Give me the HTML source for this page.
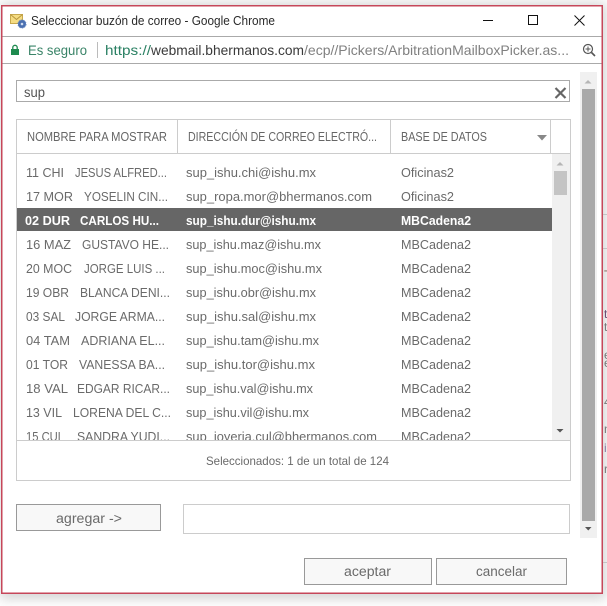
<!DOCTYPE html>
<html><head><meta charset="utf-8"><style>
html,body{margin:0;padding:0;background:#fff;width:607px;height:606px;overflow:hidden}
svg{display:block}
text{font-family:"Liberation Sans",sans-serif;font-size:12.5px;fill:#6a6a6a}
.s{font-weight:bold;fill:#fff}
.f{font-size:12px;fill:#777}
</style></head><body>
<svg width="607" height="606" viewBox="0 0 607 606" xmlns="http://www.w3.org/2000/svg">
<defs>
<filter id="sh" x="-5%" y="-5%" width="110%" height="110%"><feGaussianBlur stdDeviation="6"/></filter>
<clipPath id="list"><rect x="17" y="154" width="535" height="286"/></clipPath>
</defs>
<rect x="0" y="0" width="607" height="606" fill="#fff"/>
<rect x="0" y="3" width="606" height="596" fill="#999" opacity=".42" filter="url(#sh)"/>
<g fill="#c4c4c4"><rect x="603" y="214" width="4" height="1"/><rect x="603" y="248" width="4" height="1"/><rect x="603" y="562" width="4" height="1"/></g>
<text class="f" x="604" y="279" style="fill:#7a5a50">T</text>
<text class="f" x="604" y="318" style="fill:#6b4a70">t</text>
<text class="f" x="604" y="331">t</text>
<text class="f" x="604" y="359">e</text>
<text class="f" x="604" y="367">e</text>
<text class="f" x="604" y="406">4</text>
<text class="f" x="604" y="433">n</text>
<text class="f" x="604" y="452" style="fill:#8a7aa0">ic</text>
<text class="f" x="604" y="473">r</text>
<rect x="1.750" y="5.750" width="600.500" height="587.500" fill="#fff" stroke="#c6475a" stroke-width="1.500"/>
<rect x="2.500" y="36" width="599" height="1" fill="#aaa"/>
<rect x="2.500" y="63" width="599" height="1" fill="#aaa"/>

<!-- title icon -->
<rect x="10.500" y="14.500" width="12" height="9" fill="#f5dc82" stroke="#c8a94e" stroke-width="1"/>
<path d="M10.500 14.500l6 5 6-5" fill="none" stroke="#b8973f" stroke-width="1"/>
<circle cx="22" cy="24" r="4" fill="#4a6fb0" stroke="#5f83c0" stroke-dasharray="1.500 1" stroke-width="1"/>
<circle cx="22" cy="24" r="1.300" fill="#cfdcf0"/>
<text x="31" y="25" textLength="244" lengthAdjust="spacingAndGlyphs" style="font-size:13px;fill:#2a2a2a">Seleccionar buzón de correo - Google Chrome</text>

<!-- window controls -->
<rect x="483" y="20" width="10" height="1" fill="#111"/>
<rect x="528.500" y="15.500" width="9" height="9" fill="none" stroke="#111"/>
<path d="M574.500 15.500l10 10M584.500 15.500l-10 10" stroke="#111" stroke-width="1" fill="none"/>

<!-- address bar -->
<rect x="11" y="49" width="8" height="6" fill="#1e8a4f"/>
<path d="M12.800 49v-1.500a2.200 2.200 0 0 1 4.400 0V49" fill="none" stroke="#1e8a4f" stroke-width="1.300"/>
<text x="28" y="55" textLength="59" lengthAdjust="spacingAndGlyphs" style="font-size:14px;fill:#3a8468">Es seguro</text>
<rect x="97" y="42" width="1" height="16" fill="#bbb"/>
<text x="105" y="55" textLength="46" lengthAdjust="spacingAndGlyphs" style="font-size:14px;fill:#2a8063">https://</text>
<text x="151" y="55" textLength="153" lengthAdjust="spacingAndGlyphs" style="font-size:14px;fill:#3a3a3a">webmail.bhermanos.com</text>
<text x="304" y="55" textLength="265" lengthAdjust="spacingAndGlyphs" style="font-size:14px;fill:#808080">/ecp//Pickers/ArbitrationMailboxPicker.as...</text>
<circle cx="588" cy="49" r="4.500" fill="none" stroke="#555" stroke-width="1.200"/>
<path d="M591.500 52.500l3.500 3.500" stroke="#555" stroke-width="1.600"/>
<path d="M585.500 49h5M588 46.500v5" stroke="#555" stroke-width="1"/>

<!-- page scrollbar -->
<rect x="580" y="72" width="17" height="466" fill="#f0f0f0"/>
<rect x="582" y="89" width="13" height="432" fill="#a9a9a9"/>
<path d="M584.500 83.500l3.500-3.500 3.500 3.500z" fill="#b5b5b5"/>
<path d="M585 527h6.500l-3.250 3.500z" fill="#555"/>

<!-- search -->
<rect x="16.500" y="80.500" width="553" height="21" fill="#fff" stroke="#aaa"/>
<text x="24" y="97" textLength="21" lengthAdjust="spacingAndGlyphs" style="font-size:13.500px;fill:#555">sup</text>
<path d="M555.500 88l10 10M565.500 88l-10 10" stroke="#666" stroke-width="2.200" fill="none"/>

<!-- table -->
<rect x="16.500" y="119.500" width="554" height="361" fill="#fff" stroke="#ccc"/>
<rect x="17" y="153" width="553" height="1" fill="#ccc"/>
<rect x="177" y="120" width="1" height="33" fill="#ccc"/>
<rect x="390" y="120" width="1" height="33" fill="#ccc"/>
<rect x="550" y="120" width="1" height="33" fill="#ccc"/>
<text x="27" y="141" textLength="140" lengthAdjust="spacingAndGlyphs" style="font-size:12.500px;fill:#666">NOMBRE PARA MOSTRAR</text>
<text x="188" y="141" textLength="189" lengthAdjust="spacingAndGlyphs" style="font-size:12.500px;fill:#666">DIRECCIÓN DE CORREO ELECTRÓ...</text>
<text x="401" y="141" textLength="86" lengthAdjust="spacingAndGlyphs" style="font-size:12.500px;fill:#666">BASE DE DATOS</text>
<path d="M537 135h10l-5 5.500z" fill="#888"/>

<rect x="552" y="154" width="18" height="286" fill="#f0f0f0"/>
<rect x="554" y="171" width="13" height="24" fill="#c4c4c4"/>
<path d="M556.500 165.500l3.500-3.500 3.500 3.500z" fill="#b5b5b5"/>
<path d="M556.500 429h7l-3.500 3.500z" fill="#555"/>

<rect x="17" y="208" width="535" height="23" fill="#666"/>
<g clip-path="url(#list)">
<text x="26" y="177" textLength="38" lengthAdjust="spacingAndGlyphs">11 CHI</text><text x="75" y="177" textLength="92" lengthAdjust="spacingAndGlyphs">JESUS ALFRED...</text><text x="186" y="177" textLength="130" lengthAdjust="spacingAndGlyphs">sup_ishu.chi@ishu.mx</text><text x="401" y="177" textLength="53" lengthAdjust="spacingAndGlyphs">Oficinas2</text>
<text x="26" y="201" textLength="47" lengthAdjust="spacingAndGlyphs">17 MOR</text><text x="84" y="201" textLength="84" lengthAdjust="spacingAndGlyphs">YOSELIN CIN...</text><text x="186" y="201" textLength="186" lengthAdjust="spacingAndGlyphs">sup_ropa.mor@bhermanos.com</text><text x="401" y="201" textLength="53" lengthAdjust="spacingAndGlyphs">Oficinas2</text>
<text class="s" x="25" y="225" textLength="45" lengthAdjust="spacingAndGlyphs">02 DUR</text><text class="s" x="80" y="225" textLength="79" lengthAdjust="spacingAndGlyphs">CARLOS HU...</text><text class="s" x="186" y="225" textLength="130" lengthAdjust="spacingAndGlyphs">sup_ishu.dur@ishu.mx</text><text class="s" x="401" y="225" textLength="70" lengthAdjust="spacingAndGlyphs">MBCadena2</text>
<text x="26" y="249" textLength="45" lengthAdjust="spacingAndGlyphs">16 MAZ</text><text x="82" y="249" textLength="87" lengthAdjust="spacingAndGlyphs">GUSTAVO HE...</text><text x="186" y="249" textLength="135" lengthAdjust="spacingAndGlyphs">sup_ishu.maz@ishu.mx</text><text x="401" y="249" textLength="70" lengthAdjust="spacingAndGlyphs">MBCadena2</text>
<text x="26" y="273" textLength="46" lengthAdjust="spacingAndGlyphs">20 MOC</text><text x="84" y="273" textLength="81" lengthAdjust="spacingAndGlyphs">JORGE LUIS ...</text><text x="186" y="273" textLength="136" lengthAdjust="spacingAndGlyphs">sup_ishu.moc@ishu.mx</text><text x="401" y="273" textLength="70" lengthAdjust="spacingAndGlyphs">MBCadena2</text>
<text x="26" y="297" textLength="43" lengthAdjust="spacingAndGlyphs">19 OBR</text><text x="80" y="297" textLength="90" lengthAdjust="spacingAndGlyphs">BLANCA DENI...</text><text x="186" y="297" textLength="130" lengthAdjust="spacingAndGlyphs">sup_ishu.obr@ishu.mx</text><text x="401" y="297" textLength="70" lengthAdjust="spacingAndGlyphs">MBCadena2</text>
<text x="26" y="321" textLength="39" lengthAdjust="spacingAndGlyphs">03 SAL</text><text x="75" y="321" textLength="90" lengthAdjust="spacingAndGlyphs">JORGE ARMA...</text><text x="186" y="321" textLength="130" lengthAdjust="spacingAndGlyphs">sup_ishu.sal@ishu.mx</text><text x="401" y="321" textLength="70" lengthAdjust="spacingAndGlyphs">MBCadena2</text>
<text x="26" y="345" textLength="44" lengthAdjust="spacingAndGlyphs">04 TAM</text><text x="81" y="345" textLength="84" lengthAdjust="spacingAndGlyphs">ADRIANA EL...</text><text x="186" y="345" textLength="133" lengthAdjust="spacingAndGlyphs">sup_ishu.tam@ishu.mx</text><text x="401" y="345" textLength="70" lengthAdjust="spacingAndGlyphs">MBCadena2</text>
<text x="26" y="369" textLength="42" lengthAdjust="spacingAndGlyphs">01 TOR</text><text x="79" y="369" textLength="86" lengthAdjust="spacingAndGlyphs">VANESSA BA...</text><text x="186" y="369" textLength="129" lengthAdjust="spacingAndGlyphs">sup_ishu.tor@ishu.mx</text><text x="401" y="369" textLength="70" lengthAdjust="spacingAndGlyphs">MBCadena2</text>
<text x="26" y="393" textLength="42" lengthAdjust="spacingAndGlyphs">18 VAL</text><text x="77" y="393" textLength="93" lengthAdjust="spacingAndGlyphs">EDGAR RICAR...</text><text x="186" y="393" textLength="127" lengthAdjust="spacingAndGlyphs">sup_ishu.val@ishu.mx</text><text x="401" y="393" textLength="70" lengthAdjust="spacingAndGlyphs">MBCadena2</text>
<text x="26" y="417" textLength="36" lengthAdjust="spacingAndGlyphs">13 VIL</text><text x="73" y="417" textLength="98" lengthAdjust="spacingAndGlyphs">LORENA DEL C...</text><text x="186" y="417" textLength="123" lengthAdjust="spacingAndGlyphs">sup_ishu.vil@ishu.mx</text><text x="401" y="417" textLength="70" lengthAdjust="spacingAndGlyphs">MBCadena2</text>
<text x="26" y="441" textLength="38" lengthAdjust="spacingAndGlyphs">15 CUL</text><text x="77" y="441" textLength="93" lengthAdjust="spacingAndGlyphs">SANDRA YUDI...</text><text x="186" y="441" textLength="191" lengthAdjust="spacingAndGlyphs">sup_joyeria.cul@bhermanos.com</text><text x="401" y="441" textLength="70" lengthAdjust="spacingAndGlyphs">MBCadena2</text>
</g>
<rect x="17" y="440" width="553" height="1" fill="#ccc"/>
<text x="206" y="465" textLength="183" lengthAdjust="spacingAndGlyphs" style="font-size:12px">Seleccionados: 1 de un total de 124</text>

<!-- controls -->
<rect x="16.500" y="504.500" width="144" height="26" fill="#f8f8f8" stroke="#999"/>
<text x="56" y="523" textLength="66" lengthAdjust="spacingAndGlyphs" style="font-size:13.500px">agregar -&gt;</text>
<rect x="183.500" y="504.500" width="386" height="29" fill="#fff" stroke="#ccc"/>
<rect x="304.500" y="558.500" width="127" height="26" fill="#f8f8f8" stroke="#999"/>
<text x="344" y="576" textLength="47" lengthAdjust="spacingAndGlyphs" style="font-size:13.500px">aceptar</text>
<rect x="436.500" y="558.500" width="130" height="26" fill="#f8f8f8" stroke="#999"/>
<text x="476" y="576" textLength="51" lengthAdjust="spacingAndGlyphs" style="font-size:13.500px">cancelar</text>
</svg>
</body></html>
